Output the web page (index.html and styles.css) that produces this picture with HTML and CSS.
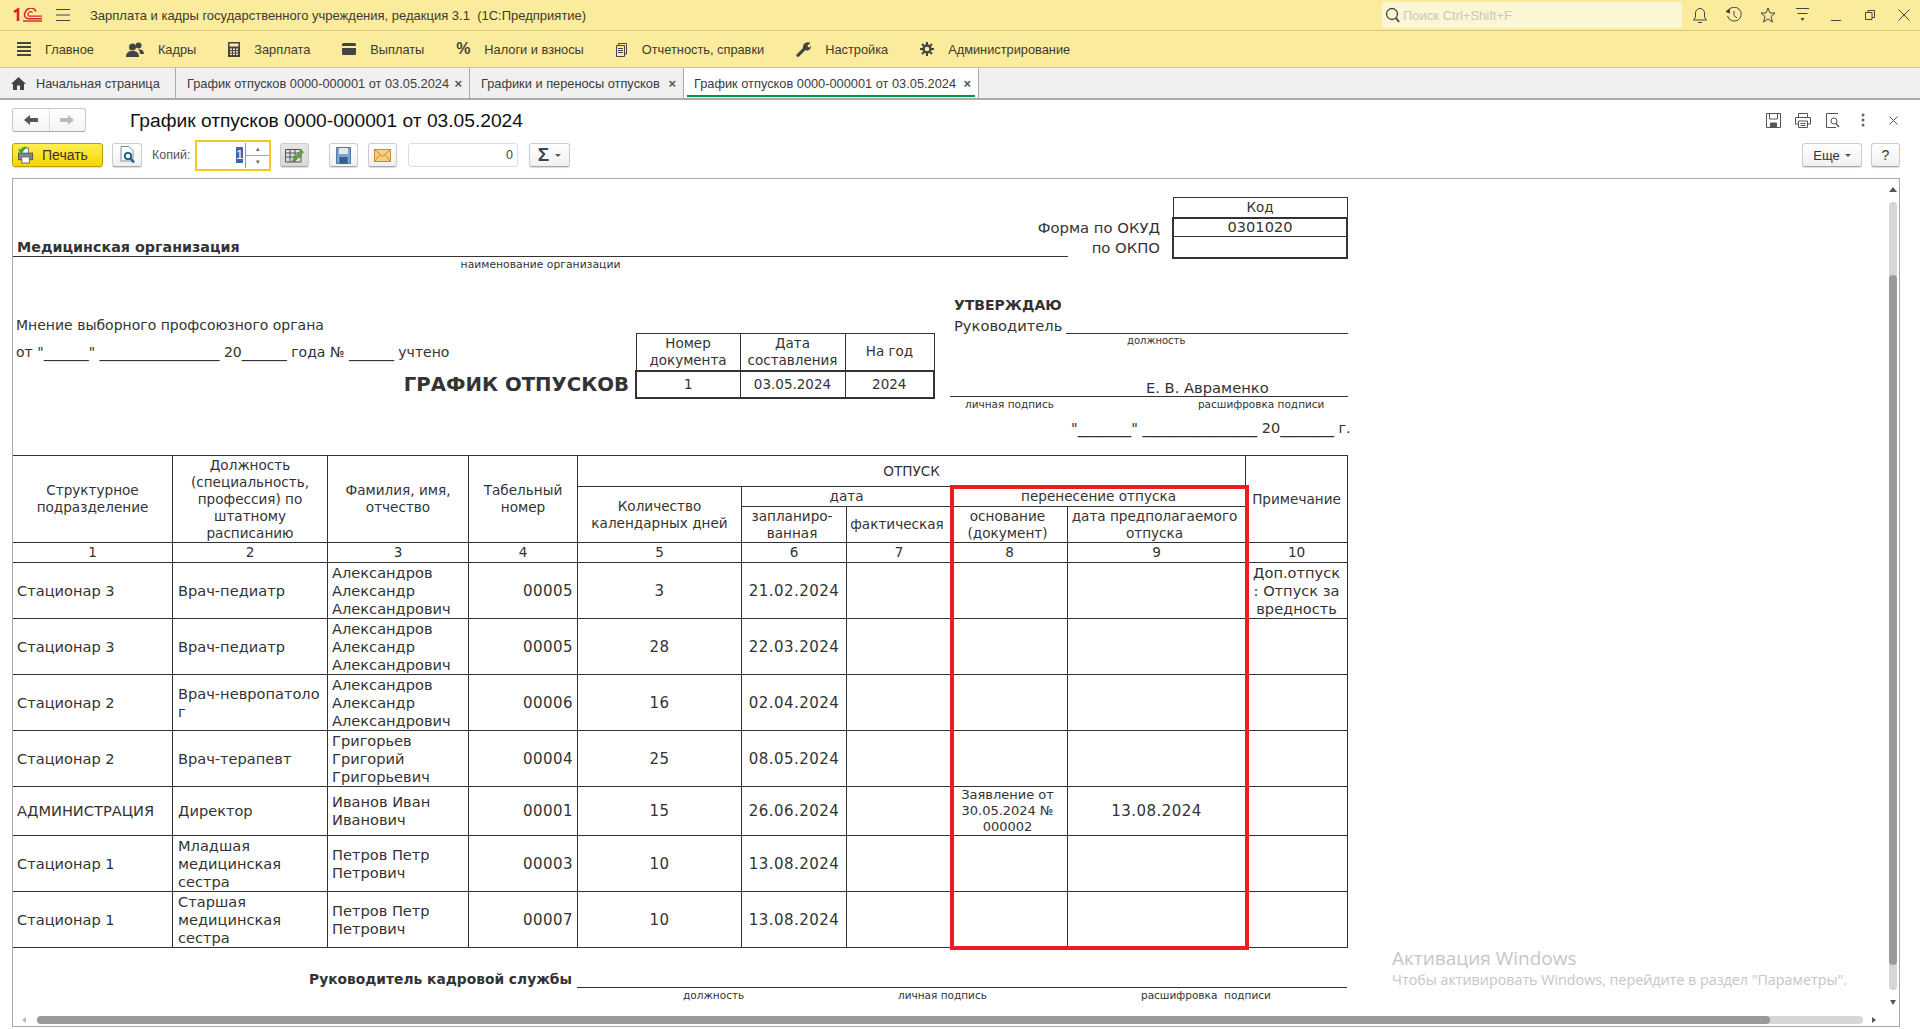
FILE: index.html
```html
<!DOCTYPE html>
<html lang="ru">
<head>
<meta charset="UTF-8" />
<title>График отпусков 0000-000001 от 03.05.2024</title>
<link rel="stylesheet" href="styles.css">
</head>
<body>
<div class="titlebar">
  <svg class="logo" width="30" height="14" viewBox="0 0 30 14" fill="none" stroke="#d9232a">
    <path d="M1 4 L5 1.5 V13" stroke-width="2.6"/>
    <path d="M23 3.5 A5.5 5.5 0 0 0 13 3 Q11.5 5 11.5 7 Q12 11 17 10.8 H29" stroke-width="1.5"/>
    <path d="M19.5 4.6 A2.6 2.6 0 0 0 15 6.8 Q15.2 8.2 17 8.2 H29" stroke-width="1.3"/>
    <path d="M10 13 H29" stroke-width="1.4"/>
  </svg>
  <svg class="burger" width="14" height="12" viewBox="0 0 14 12" stroke="#444"><path d="M0 .5H14M0 6H14M0 11.5H14"/></svg>
  <span class="app-name">Зарплата и кадры государственного учреждения, редакция 3.1&nbsp; (1С:Предприятие)</span>
  <div class="search">
    <svg width="15" height="16" viewBox="0 0 15 16" fill="none" stroke="#444"><circle cx="7" cy="7" r="5.5" stroke-width="1.3"/><path d="M11 11L14 15" stroke-width="1.8"/></svg>
    <span>Поиск Ctrl+Shift+F</span>
  </div>
  <div class="win-icons">
    <svg width="16" height="17" viewBox="0 0 16 17" fill="none" stroke="#444"><path d="M1.5 13H14.5L12.5 10V6A4.500 4.500 0 0 0 3.500 6V10Z"/><path d="M6 15.500H10"/></svg>
    <svg width="16" height="16" viewBox="0 0 16 16" fill="none" stroke="#444"><path d="M2 4A7 7 0 1 1 1.500 9"/><path d="M0 4.500L3.500 6V2Z" fill="#444"/><path d="M8 4V8.500L11 11"/></svg>
    <svg width="16" height="16" viewBox="0 0 16 16" fill="none" stroke="#444"><path d="M8 1L10 6H15L11 9.500L12.500 15L8 12L3.500 15L5 9.500L1 6H6Z"/></svg>
    <svg width="15" height="14" viewBox="0 0 15 14" fill="#444" stroke="#444"><path d="M1 .5H14M2.500 5.500H12.500" fill="none"/><path d="M5.500 10H9.500L7.500 13Z" stroke="none"/></svg>
    <svg width="10" height="14" viewBox="0 0 10 14" stroke="#444"><path d="M0 12.500H10"/></svg>
    <svg width="10" height="10" viewBox="0 0 10 10" fill="none" stroke="#444"><path d="M.5 2.500H7V9.500H.5Z"/><path d="M3 2.500V.5H9.500V7.500H7"/></svg>
    <svg width="12" height="12" viewBox="0 0 12 12" stroke="#444"><path d="M.5 .5L11.500 11.500M11.500 .5L.5 11.500"/></svg>
  </div>
</div>

<nav class="menubar">
  <a class="menu-item"><svg width="14" height="14" viewBox="0 0 14 14" stroke="#444" stroke-width="2"><path d="M0 1H14M0 5H14M0 9H14M0 13H14"/></svg>Главное</a>
  <a class="menu-item"><svg width="18" height="15" viewBox="0 0 18 15" fill="#444"><circle cx="6.500" cy="5" r="3.500"/><circle cx="12.500" cy="3.500" r="3"/><path d="M0 15C0 10 3 9 6.500 9S13 10 13 15Z"/><path d="M12 7.500C15 7 18 8 18 12H14C14 10 13.500 9 12 7.500Z"/></svg>Кадры</a>
  <a class="menu-item"><svg width="12" height="15" viewBox="0 0 12 15"><rect width="12" height="15" fill="#444"/><rect x="1.500" y="1.500" width="9" height="3" fill="#fbec9d"/><path d="M2 6.500H4V8H2ZM5 6.500H7V8H5ZM8 6.500H10V8H8ZM2 9H4V10.500H2ZM5 9H7V10.500H5ZM8 9H10V10.500H8ZM2 11.500H4V13H2ZM5 11.500H7V13H5ZM8 11.500H10V13H8Z" fill="#fbec9d"/></svg>Зарплата</a>
  <a class="menu-item"><svg width="14" height="12" viewBox="0 0 14 12"><path d="M0 1.500Q0 0 1.500 0H12.500Q14 0 14 1.500V3H0ZM0 5H14V10.500Q14 12 12.500 12H1.500Q0 12 0 10.500Z" fill="#444"/></svg>Выплаты</a>
  <a class="menu-item"><span class="percent">%</span>Налоги и взносы</a>
  <a class="menu-item"><svg width="12" height="15" viewBox="0 0 12 15" fill="none" stroke="#444"><path d="M.5 3.500H8.500V14.500H.5Z"/><path d="M2.500 3V1.500H10.500V12H9"/><path d="M2 6.500H7M2 8.500H7M2 10.500H7"/></svg>Отчетность, справки</a>
  <a class="menu-item"><svg width="15" height="15" viewBox="0 0 15 15" fill="#444"><path d="M9 1Q12 -.5 14.500 1L11.500 3.500L12 5L14 5.500L15 3Q15.500 6.500 13 8Q11 9 9.500 8L3 14.500Q1.500 15.500 .5 14Q0 13 1 12L7 6Q6.500 3 9 1Z"/></svg>Настройка</a>
  <a class="menu-item"><svg width="14" height="14" viewBox="0 0 14 14" fill="none" stroke="#444"><circle cx="7" cy="7" r="3.500" stroke-width="2.400"/><path d="M7 0V3M7 11V14M0 7H3M11 7H14M2 2L4 4M10 10L12 12M2 12L4 10M10 4L12 2" stroke-width="2"/></svg>Администрирование</a>
</nav>

<div class="tabs">
  <div class="tab tab-home">
    <svg width="15" height="13" viewBox="0 0 15 13" fill="#444"><path d="M7.500 0L15 7H13V13H9V8.500H6V13H2V7H0Z"/></svg>
    <span>Начальная страница</span>
  </div>
  <div class="tab tab-doc"><span>График отпусков 0000-000001 от 03.05.2024</span><i class="tab-x">×</i></div>
  <div class="tab tab-list"><span>Графики и переносы отпусков</span><i class="tab-x">×</i></div>
  <div class="tab tab-doc tab-active"><span>График отпусков 0000-000001 от 03.05.2024</span><i class="tab-x">×</i></div>
</div>

<div class="form-title">
  <div class="nav-btns">
    <span class="nav-btn"><svg width="14" height="10" viewBox="0 0 14 10" fill="#555"><path d="M0 5L6 0V3H14V7H6V10Z"/></svg></span>
    <span class="nav-btn"><svg width="14" height="10" viewBox="0 0 14 10" fill="#bbb"><path d="M14 5L8 0V3H0V7H8V10Z"/></svg></span>
  </div>
  <h1>График отпусков 0000-000001 от 03.05.2024</h1>
  <div class="form-icons">
    <svg width="15" height="15" viewBox="0 0 15 15" fill="none" stroke="#555"><path d="M.5 .5H14.500V14.500H.5Z"/><path d="M3.500 .5V6H11.500V.5"/><path d="M4.500 10H10.500V14.500H4.500Z" fill="#555"/></svg>
    <svg width="16" height="15" viewBox="0 0 16 15" fill="none" stroke="#555"><path d="M3.500 4V.5H12.500V4"/><path d="M3.500 11H.5V4.500H15.500V11H12.500"/><path d="M3.500 8H12.500V14.500H3.500Z"/><path d="M5.500 10.500H10.500M5.500 12.500H10.500"/></svg>
    <svg width="15" height="15" viewBox="0 0 15 15" fill="none" stroke="#555"><path d="M10 14.500H.5V.5H12"/><circle cx="8" cy="8" r="3"/><path d="M10 10.500L13 14" stroke-width="1.500"/></svg>
    <svg width="4" height="14" viewBox="0 0 4 14" fill="#666"><circle cx="2" cy="2" r="1.500"/><circle cx="2" cy="7" r="1.500"/><circle cx="2" cy="12" r="1.500"/></svg>
    <svg width="9" height="9" viewBox="0 0 9 9" stroke="#555"><path d="M.5 .5L8.500 8.500M8.500 .5L.5 8.500"/></svg>
  </div>
</div>

<div class="toolbar">
  <button class="btn btn-print">
    <svg width="17" height="18" viewBox="0 0 18 18"><path d="M4 7V1.500H11V7" fill="#fff" stroke="#666"/><rect x=".5" y="7" width="15" height="7" fill="#7d8790" stroke="#555"/><rect x="4" y="11" width="8" height="6.500" fill="#fff" stroke="#666"/><path d="M1 3L3.500 6L8 .5" fill="none" stroke="#29a329" stroke-width="2"/></svg>
    Печать
  </button>
  <button class="btn btn-preview">
    <svg width="15" height="18" viewBox="0 0 15 18" fill="none"><path d="M1 .5H9L13 4.500V15H1Z" fill="#fff" stroke="#7e8a96"/><circle cx="8" cy="10" r="3.200" stroke="#1a5c8a" stroke-width="1.800"/><path d="M10.500 12.500L14 16.500" stroke="#1a5c8a" stroke-width="2"/></svg>
  </button>
  <label class="copies-label">Копий:</label>
  <div class="copies">
    <span class="copies-val">1</span>
    <div class="spin"><i>▴</i><i>▾</i></div>
  </div>
  <button class="btn btn-edit">
    <svg width="19" height="17" viewBox="0 0 19 17" fill="none"><path d="M.5 2.500H16V15H.5ZM.5 6H16M.5 10H16M5 2.500V15M10 2.500V15" stroke="#555"/><path d="M7 15L9 11L16 3L18.500 5L11 13Z" fill="#5ea83a" stroke="#3d7a22" stroke-width=".6"/></svg>
  </button>
  <button class="btn btn-save">
    <svg width="15" height="17" viewBox="0 0 15 17"><path d="M.5 .5H14.500V16.500H.5Z" fill="#7aa5cf" stroke="#4a7aa8"/><rect x="3" y="1" width="9" height="6" fill="#dfeaf5"/><rect x="3.500" y="10" width="8" height="6.500" fill="#355f8c"/></svg>
  </button>
  <button class="btn btn-mail">
    <svg width="17" height="13" viewBox="0 0 17 13"><rect x=".5" y=".5" width="16" height="12" fill="#f7cf7d" stroke="#c98d2e"/><path d="M.5 .5L8.500 7.500L16.500 .5M.5 12.500L6 5.500M16.500 12.500L11 5.500" fill="none" stroke="#c98d2e"/></svg>
  </button>
  <div class="sum-field">0</div>
  <button class="btn btn-sigma"><span class="sigma">Σ</span><i class="caret"></i></button>
  <button class="btn btn-more">Еще<i class="caret"></i></button>
  <button class="btn btn-help">?</button>
</div>

<div class="doc">
  <div class="head-top">
    <div class="org-col">
      <div class="org">Медицинская организация</div>
      <div class="org-note">наименование организации</div>
    </div>
    <div class="okud-labels">
      <div>Форма по ОКУД</div>
      <div>по ОКПО</div>
    </div>
    <table class="code-table">
      <tr class="code-h"><td>Код</td></tr>
      <tr class="code-a"><td>0301020</td></tr>
      <tr class="code-b"><td></td></tr>
    </table>
  </div>

  <div class="head-mid">
    <div class="opinion">
      <div class="opinion-line">Мнение выборного профсоюзного органа</div>
      <div class="opinion-line">от "<span class="us">______</span>" <span class="us">________________</span> 20<span class="us">______</span> года № <span class="us">______</span> учтено</div>
      <div class="doc-name">ГРАФИК ОТПУСКОВ</div>
    </div>
    <table class="mini-table">
      <colgroup><col style="width:104px"><col style="width:105px"><col style="width:89px"></colgroup>
      <tr class="mini-h"><td>Номер<br>документа</td><td>Дата<br>составления</td><td>На год</td></tr>
      <tr class="mini-v"><td>1</td><td>03.05.2024</td><td>2024</td></tr>
    </table>
    <div class="approve">
      <div class="approve-title">УТВЕРЖДАЮ</div>
      <div class="approve-post"><span>Руководитель</span><i></i></div>
      <div class="cap approve-post-cap">должность</div>
      <div class="approve-name">Е. В. Авраменко</div>
      <div class="cap approve-caps"><span>личная подпись</span><span>расшифровка подписи</span></div>
      <div class="approve-date">"<span class="us">_______</span>" <span class="us">_______________</span> 20<span class="us">_______</span> г.</div>
    </div>
  </div>

  <div class="table-wrap">
    <table class="vac">
      <colgroup>
        <col style="width:160px"><col style="width:155px"><col style="width:141px"><col style="width:109px"><col style="width:164px">
        <col style="width:105px"><col style="width:105px"><col style="width:116px"><col style="width:178px"><col style="width:102px">
      </colgroup>
      <thead>
        <tr class="h1">
          <th rowspan="3">Структурное<br>подразделение</th>
          <th rowspan="3">Должность<br>(специальность,<br>профессия) по<br>штатному<br>расписанию</th>
          <th rowspan="3">Фамилия, имя,<br>отчество</th>
          <th rowspan="3">Табельный<br>номер</th>
          <th colspan="5">ОТПУСК</th>
          <th rowspan="3">Примечание</th>
        </tr>
        <tr class="h2">
          <th rowspan="2">Количество<br>календарных дней</th>
          <th colspan="2">дата</th>
          <th colspan="2">перенесение отпуска</th>
        </tr>
        <tr class="h3">
          <th>запланиро-<br>ванная</th>
          <th>фактическая</th>
          <th>основание<br>(документ)</th>
          <th>дата предполагаемого<br>отпуска</th>
        </tr>
        <tr class="nums">
          <th>1</th><th>2</th><th>3</th><th>4</th><th>5</th><th>6</th><th>7</th><th>8</th><th>9</th><th>10</th>
        </tr>
      </thead>
      <tbody>
        <tr><td>Стационар 3</td><td class="pos">Врач-педиатр</td><td>Александров<br>Александр<br>Александрович</td><td class="r d">00005</td><td class="c d">3</td><td class="c d">21.02.2024</td><td></td><td></td><td></td><td class="c note">Доп.отпуск<br>: Отпуск за<br>вредность</td></tr>
        <tr><td>Стационар 3</td><td class="pos">Врач-педиатр</td><td>Александров<br>Александр<br>Александрович</td><td class="r d">00005</td><td class="c d">28</td><td class="c d">22.03.2024</td><td></td><td></td><td></td><td></td></tr>
        <tr><td>Стационар 2</td><td class="pos">Врач-невропатоло<br>г</td><td>Александров<br>Александр<br>Александрович</td><td class="r d">00006</td><td class="c d">16</td><td class="c d">02.04.2024</td><td></td><td></td><td></td><td></td></tr>
        <tr><td>Стационар 2</td><td class="pos">Врач-терапевт</td><td>Григорьев<br>Григорий<br>Григорьевич</td><td class="r d">00004</td><td class="c d">25</td><td class="c d">08.05.2024</td><td></td><td></td><td></td><td></td></tr>
        <tr class="short"><td>АДМИНИСТРАЦИЯ</td><td class="pos">Директор</td><td>Иванов Иван<br>Иванович</td><td class="r d">00001</td><td class="c d">15</td><td class="c d">26.06.2024</td><td></td><td class="c small">Заявление от<br>30.05.2024 №<br>000002</td><td class="c d">13.08.2024</td><td></td></tr>
        <tr><td>Стационар 1</td><td class="pos">Младшая<br>медицинская<br>сестра</td><td>Петров Петр<br>Петрович</td><td class="r d">00003</td><td class="c d">10</td><td class="c d">13.08.2024</td><td></td><td></td><td></td><td></td></tr>
        <tr><td>Стационар 1</td><td class="pos">Старшая<br>медицинская<br>сестра</td><td>Петров Петр<br>Петрович</td><td class="r d">00007</td><td class="c d">10</td><td class="c d">13.08.2024</td><td></td><td></td><td></td><td></td></tr>
      </tbody>
    </table>
    <div class="red-box"></div>
  </div>

  <div class="hr-sign"><b>Руководитель кадровой службы</b><i></i></div>
  <div class="hr-caps cap"><span>должность</span><span>личная подпись</span><span>расшифровка&nbsp; подписи</span></div>

  <div class="vscroll"><span class="arrow-up"></span><div class="vtrack"><div class="vthumb"></div></div><span class="arrow-down"></span></div>
  <div class="hscroll"><span class="arrow-left"></span><div class="htrack"><div class="hthumb"></div></div><span class="arrow-right"></span></div>
</div>

<div class="watermark">
  <div class="wm-title">Активация Windows</div>
  <div class="wm-sub">Чтобы активировать Windows, перейдите в раздел "Параметры".</div>
</div>
</body>
</html>
```

FILE: styles.css
```css
* { box-sizing: border-box; }
html, body { margin: 0; padding: 0; }
body {
  width: 1920px;
  height: 1029px;
  overflow: hidden;
  position: relative;
  background: #fff;
  color: #333;
  font-family: "Liberation Sans", Arial, sans-serif;
  font-size: 13px;
}

/* top bars */
.titlebar {
  height: 31px;
  background: #fbec9d;
  border-bottom: 1px solid #d6c77f;
  display: flex;
  align-items: center;
}
.logo { margin-left: 13px; }
.burger { margin-left: 13px; }
.app-name { margin-left: 20px; font-size: 13px; color: #3f3a2a; white-space: nowrap; }
.search {
  margin-left: auto;
  width: 300px;
  height: 26px;
  background: #fdf6d4;
  border-radius: 2px;
  display: flex;
  align-items: center;
  gap: 3px;
  padding-left: 3px;
  color: #c9c6bb;
  font-size: 13px;
}
.win-icons {
  width: 238px;
  padding-left: 1px;
  display: grid;
  grid-template-columns: repeat(7, 34px);
  justify-items: center;
  align-items: center;
}
.menubar {
  height: 37px;
  background: #fbec9d;
  border-bottom: 1px solid #d6c77f;
  display: flex;
  align-items: center;
  padding-left: 17px;
}
.menu-item {
  display: flex;
  align-items: center;
  gap: 14px;
  margin-right: 32px;
  color: #3f3a2a;
  font-size: 12.8px;
  white-space: nowrap;
}
.percent { font-size: 16px; font-weight: bold; color: #444; width: 14px; }
.tabs {
  height: 32px;
  background: #f0f0f0;
  border-bottom: 2px solid #aaa;
  display: flex;
}
.tab {
  display: flex;
  align-items: center;
  border-right: 1px solid #aaa;
  padding-left: 11px;
  font-size: 12.8px;
  color: #3c3c3c;
  position: relative;
  white-space: nowrap;
}
.tab-home { width: 176px; gap: 10px; }
.tab-doc { width: 294px; }
.tab-list { width: 214px; }
.tab-x { position: absolute; right: 7px; font-style: normal; font-weight: bold; font-size: 13px; color: #555; }
.tab-active { background: #fff; width: 295px; padding-left: 10px; }
.tab-active::after {
  content: "";
  position: absolute;
  left: 3px;
  right: 3px;
  bottom: 1px;
  height: 2px;
  background: #00964a;
}

/* form head */
.form-title {
  height: 24px;
  margin-top: 8px;
  display: flex;
  align-items: center;
  padding-left: 12px;
}
.form-title h1 { margin: 2px 0 0 44px; font-size: 19.2px; font-weight: normal; color: #111; white-space: nowrap; }
.nav-btns {
  display: flex;
  width: 74px;
  height: 24px;
  border: 1px solid #c8c8c8;
  border-bottom-color: #aaa;
  border-radius: 3px;
  background: linear-gradient(#fff, #f4f4f4);
}
.nav-btn { flex: 1; display: flex; align-items: center; justify-content: center; }
.nav-btn + .nav-btn { border-left: 1px solid #ddd; }
.form-icons {
  margin-left: auto;
  display: grid;
  grid-template-columns: repeat(5, 30px);
  justify-items: center;
  align-items: center;
  padding-right: 12px;
}
.toolbar {
  height: 24px;
  margin-top: 11px;
  padding: 0 20px 0 12px;
  display: flex;
  align-items: center;
}
.btn {
  height: 24px;
  padding: 0;
  border: 1px solid #ccc;
  border-bottom-color: #a8a8a8;
  border-radius: 3px;
  background: linear-gradient(#fff, #f0f0f0);
  box-shadow: 0 1px 1px #ddd;
  display: flex;
  align-items: center;
  justify-content: center;
  font-family: inherit;
  font-size: 13px;
  color: #333;
}
.btn-print {
  width: 91px;
  gap: 7px;
  justify-content: flex-start;
  padding-left: 5px;
  background: linear-gradient(#fff04f, #f5d400);
  border-color: #b9a100;
  font-size: 14px;
}
.btn-preview { width: 30px; margin-left: 9px; }
.copies-label { margin-left: 10px; width: 39px; color: #555; font-size: 12.5px; }
.copies {
  margin-left: 4px;
  width: 76px;
  height: 31px;
  border: 2px solid #f9c623;
  display: flex;
  align-items: center;
  justify-content: flex-end;
}
.copies-val { background: #3f64b4; color: #fff; width: 7px; height: 16px; line-height: 16px; font-size: 13px; text-align: center; }
.spin {
  width: 24px;
  height: 25px;
  margin-left: 2px;
  border-left: 1px solid #999;
  display: flex;
  flex-direction: column;
  font-size: 7px;
  color: #666;
  text-align: center;
}
.spin i { flex: 1; font-style: normal; line-height: 12px; }
.spin i + i { border-top: 1px solid #aaa; }
.btn-edit { width: 29px; margin-left: 9px; background: linear-gradient(#e6e6e6, #d8d8d8); }
.btn-save { width: 29px; margin-left: 20px; }
.btn-mail { width: 29px; margin-left: 10px; }
.sum-field {
  margin-left: 11px;
  width: 110px;
  height: 24px;
  border: 1px solid #ddd;
  border-radius: 3px;
  text-align: right;
  padding-right: 4px;
  line-height: 22px;
  color: #444;
  font-size: 12.5px;
}
.btn-sigma { width: 41px; margin-left: 11px; gap: 6px; }
.sigma { font-size: 19px; font-weight: bold; color: #33475a; }
.caret { width: 0; height: 0; border: 3px solid transparent; border-top: 3px solid #555; border-bottom: 0; }
.btn-more { width: 60px; margin-left: auto; gap: 5px; }
.btn-help { width: 29px; margin-left: 9px; font-size: 14px; }

/* document */
.doc {
  position: relative;
  height: 849px;
  margin: 11px 20px 0 12px;
  border: 1px solid #aaa;
  overflow: hidden;
  font-family: "DejaVu Sans", Verdana, sans-serif;
  font-size: 13.5px;
  color: #333;
}
.cap { font-size: 10.5px; }
.head-top { display: flex; margin-top: 18px; height: 60px; }
.org-col { width: 1055px; flex: none; }
.org {
  height: 60px;
  border-bottom: 1px solid #333;
  padding: 0 0 0 4px;
  font-weight: bold;
  font-size: 14.3px;
  line-height: 17px;
  display: flex;
  align-items: flex-end;
}
.org-note { text-align: center; line-height: 15px; font-size: 10.8px; }
.okud-labels {
  width: 92px;
  flex: none;
  padding-top: 21px;
  line-height: 20px;
  font-size: 14.8px;
  display: flex;
  flex-direction: column;
  align-items: flex-end;
  white-space: nowrap;
}
.code-table { margin-left: 12px; width: 176px; border-collapse: collapse; text-align: center; height: 60px; }
.code-table td { padding: 0; border: 1px solid #333; line-height: 16px; }
.code-h td { height: 20px; border-top-width: 1px; }
.code-a td { height: 19px; border: 2px solid #333; border-bottom-width: 1px; font-size: 14.6px; }
.code-b td { height: 21px; border: 2px solid #333; border-top-width: 1px; }
.head-mid { display: flex; height: 183px; margin-top: 15px; }
.opinion { width: 622px; flex: none; padding: 40px 0 0 3px; }
.opinion-line { line-height: 27px; white-space: nowrap; font-size: 14px; }
.us { font-size: 15px; }
.doc-name {
  margin-top: 3px;
  line-height: 32px;
  text-align: right;
  padding-right: 6px;
  font-size: 19.7px;
  font-weight: bold;
  white-space: nowrap;
}
.mini-table {
  width: 298px;
  height: 64px;
  flex: none;
  margin-top: 61px;
  border-collapse: collapse;
  table-layout: fixed;
  text-align: center;
  line-height: 17px;
}
.mini-table td { padding: 0; border: 1px solid #333; }
.mini-h td { height: 37px; }
.mini-v td { height: 27px; border-top-width: 2px; border-bottom-width: 2px; }
.mini-v td:first-child { border-left-width: 2px; }
.mini-v td:last-child { border-right-width: 2px; }
.approve { width: 398px; flex: none; margin-left: 15px; white-space: nowrap; }
.approve-title { margin: 24px 0 0 4px; line-height: 18px; font-weight: bold; font-size: 14px; }
.approve-post { height: 20px; padding-left: 4px; display: flex; align-items: flex-end; font-size: 14.7px; }
.approve-post i { flex: 1; border-bottom: 1px solid #333; margin-left: 4px; }
.approve-post-cap { height: 14px; line-height: 14px; padding-left: 177px; font-size: 10px; }
.approve-name {
  margin-top: 32px;
  height: 17px;
  line-height: 16px;
  border-bottom: 1px solid #333;
  padding-left: 196px;
  font-size: 14.7px;
}
.approve-caps { height: 14px; line-height: 14px; padding-left: 15px; display: flex; }
.approve-caps span + span { margin-left: 144px; }
.approve-date { margin-top: 9px; line-height: 17px; padding-left: 121px; font-size: 14.5px; }
.approve-date .us { font-size: 15.3px; }

/* main table */
.table-wrap { position: relative; margin: 0 0 0 -1px; width: 1336px; }
.vac { width: 1335px; border-collapse: collapse; table-layout: fixed; }
.vac th, .vac td { border: 1px solid #333; padding: 0 4px; overflow: hidden; }
.vac th { font-weight: normal; font-size: 13.6px; line-height: 17px; text-align: center; }
.h1 th { height: 31px; }
.h2 th { height: 20px; }
.h3 th { height: 36px; padding: 0 5px 0 1px; }
.nums th { height: 20px; }
.vac td { height: 56px; line-height: 18px; text-align: left; white-space: nowrap; font-size: 14.6px; }
.vac .short td { height: 49px; }
.vac .pos { padding-left: 5px; }
.vac .r { text-align: right; }
.vac .c { text-align: center; }
.vac .d { font-size: 15px; letter-spacing: .45px; }
.vac .note { padding: 0; }
.vac .small { font-size: 13px; line-height: 16px; padding: 0 4px 0 0; }
.red-box {
  position: absolute;
  left: 938px;
  top: 30px;
  width: 299px;
  height: 465px;
  border: 4px solid #ed1c24;
  pointer-events: none;
}
.hr-sign { display: flex; height: 17px; margin-top: 23px; width: 1334px; font-size: 13.8px; }
.hr-sign b { width: 559px; flex: none; text-align: right; line-height: 16px; white-space: nowrap; }
.hr-sign i { flex: 1; margin-left: 5px; border-bottom: 1px solid #333; }
.hr-caps { display: grid; grid-template-columns: 215px 243px auto; padding-left: 670px; line-height: 14px; }
.hr-caps span { white-space: nowrap; }

/* scrollbars over the sheet */
.vscroll { position: absolute; right: 2px; top: 0; bottom: 0; width: 8px; }
.arrow-up, .arrow-down, .arrow-left, .arrow-right { position: absolute; width: 0; height: 0; border: 3px solid transparent; }
.arrow-up { top: 8px; left: 0; border-width: 0 4px 5px; border-bottom-color: #555; }
.arrow-down { top: 821px; left: 1px; border-width: 5px 3px 0; border-top-color: #555; }
.vtrack { position: absolute; top: 23px; left: 0; width: 8px; height: 788px; background: #d6d6d6; border-radius: 4px; }
.vthumb { position: absolute; top: 73px; left: 0; width: 8px; height: 690px; background: #9a9a9a; border-radius: 4px; }
.hscroll { position: absolute; left: 0; right: 0; bottom: 2px; height: 8px; }
.arrow-left { left: 9px; top: 1px; border-width: 3px 4px 3px 0; border-right-color: #bbb; }
.arrow-right { left: 1859px; top: 1px; border-width: 3px 0 3px 4px; border-left-color: #555; }
.htrack { position: absolute; left: 24px; top: 0; width: 1826px; height: 8px; background: #d6d6d6; border-radius: 4px; }
.hthumb { position: absolute; left: 0; top: 0; width: 1733px; height: 8px; background: #9a9a9a; border-radius: 4px; }

/* activation notice */
.watermark {
  position: absolute;
  left: 1392px;
  top: 945px;
  font-family: "Open Sans", sans-serif;
  color: #c6c6c6;
  white-space: nowrap;
}
.wm-title { font-size: 19px; line-height: 26px; }
.wm-sub { font-size: 14.3px; line-height: 18px; }
```
